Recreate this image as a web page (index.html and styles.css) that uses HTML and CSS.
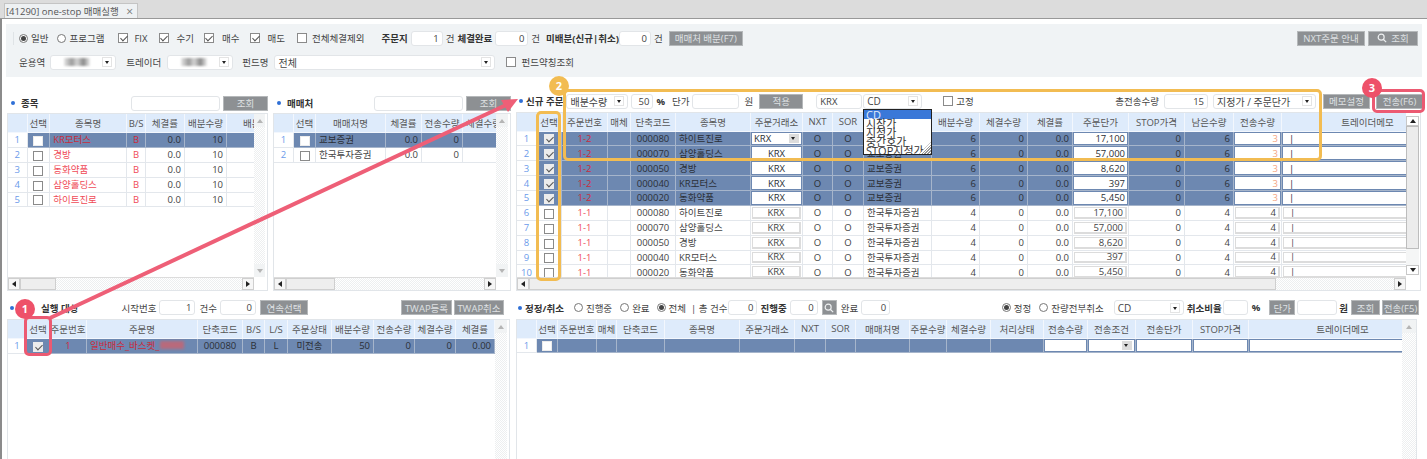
FILE: index.html
```html
<!DOCTYPE html>
<html lang="ko">
<head>
    <meta charset="UTF-8">
    <title>[41290] one-stop 매매실행</title>
    <link rel="stylesheet" href="styles.css">
</head>
<body>
    <!-- Tab bar -->
    <div class="tabbar">
        <div class="tab">[41290] one-stop 매매실행<span class="tab-x">×</span></div>
    </div>

    <div class="window">
        <!-- Filters -->
        <div class="filters">
            <div class="f-row">
                <span class="sep"></span>
                <label class="opt g3 ml-5"><i class="rd on"></i>일반</label>
                <label class="opt g3 ml-9"><i class="rd"></i>프로그램</label>
                <label class="opt g6 ml-14"><i class="ck on"></i>FIX</label>
                <label class="opt g8 ml-11"><i class="ck on"></i>수기</label>
                <label class="opt g8 ml-10"><i class="ck on"></i>매수</label>
                <label class="opt g7 ml-11"><i class="ck on"></i>매도</label>
                <label class="opt ml-12"><i class="ck"></i>전체체결제외</label>
                <b class="ml-17">주문지</b>
                <span class="input num w-32 ml-3">1</span><span class="ml-3">건</span>
                <b class="ml-3">체결완료</b>
                <span class="input num w-33 ml-3">0</span><span class="ml-3">건</span>
                <b class="ml-6">미배분(신규|취소)</b>
                <span class="input num w-32">0</span><span class="ml-3">건</span>
                <button class="btn w-74 ml-6">매매처 배분(F7)</button>
                <button class="btn w-68 push">NXT주문 안내</button>
                <button class="btn w-50 ml-3">
                    <svg class="glass" viewBox="0 0 12 12"><circle cx="5" cy="5" r="3.6"/><path d="M7.8 7.8 11 11"/></svg>
                    조회
                </button>
            </div>
            <div class="f-row f-row2">
                <span class="ml-6">운용역</span>
                <span class="select w-66 ml-5"><span class="smudge"></span><i class="drop"></i></span>
                <span class="ml-10">트레이더</span>
                <span class="select w-66 ml-6"><span class="smudge"></span><i class="drop"></i></span>
                <span class="ml-9">펀드명</span>
                <span class="select w-221 ml-6">전체<i class="drop"></i></span>
                <label class="opt ml-11"><i class="ck"></i>펀드약칭조회</label>
            </div>
        </div>

        <!-- Top row -->
        <div class="top-row">
            <section class="panel w-261">
                <div class="tool">
                    <i class="dot ml-4"></i><b class="ml-6">종목</b>
                    <span class="input w-89 push"></span>
                    <button class="btn w-45 ml-3">조회</button>
                </div>
                <div class="gridbox pr-2">
                    <div class="gridmain">
                        <div class="clip">
                            <table class="grid w-287">
                                <colgroup><col class="w-19"><col class="w-22"><col class="w-75"><col class="w-18"><col class="w-38"><col class="w-41"><col class="w-66"></colgroup>
                                <thead><tr><th></th><th>선택</th><th>종목명</th><th>B/S</th><th>체결률</th><th>배분수량</th><th>배분수량</th></tr></thead>
                                <tbody>
                                    <tr class="picked"><td class="n">1</td><td class="c"><i class="ck"></i></td><td class="l red">KR모터스</td><td class="c red">B</td><td class="r">0.0</td><td class="r">10</td><td class="r"></td></tr>
                                    <tr><td class="n">2</td><td class="c"><i class="ck"></i></td><td class="l red">경방</td><td class="c red">B</td><td class="r">0.0</td><td class="r">10</td><td class="r"></td></tr>
                                    <tr><td class="n">3</td><td class="c"><i class="ck"></i></td><td class="l red">동화약품</td><td class="c red">B</td><td class="r">0.0</td><td class="r">10</td><td class="r"></td></tr>
                                    <tr><td class="n">4</td><td class="c"><i class="ck"></i></td><td class="l red">삼양홀딩스</td><td class="c red">B</td><td class="r">0.0</td><td class="r">10</td><td class="r">500,000</td></tr>
                                    <tr><td class="n">5</td><td class="c"><i class="ck"></i></td><td class="l red">하이트진로</td><td class="c red">B</td><td class="r">0.0</td><td class="r">10</td><td class="r">100,000</td></tr>
                                </tbody>
                            </table>
                        </div>
                        <div class="vbar w-11"><span class="sb-btn"><i class="arr up"></i></span><span class="track"></span><span class="sb-btn"><i class="arr down"></i></span></div>
                    </div>
                    <div class="hbar mr-11"><span class="hb-btn"><i class="arr left dark"></i></span><span class="thumb w-36"></span><span class="track"></span><span class="hb-btn"><i class="arr right dark"></i></span></div>
                </div>
            </section>

            <section class="panel w-238 ml-5">
                <div class="tool">
                    <i class="dot ml-4"></i><b class="ml-6">매매처</b>
                    <span class="input w-89 push"></span>
                    <button class="btn w-45 ml-3">조회</button>
                </div>
                <div class="gridbox pr-2">
                    <div class="gridmain">
                        <div class="clip">
                            <table class="grid w-231">
                                <colgroup><col class="w-20"><col class="w-22"><col class="w-70"><col class="w-36"><col class="w-41"><col class="w-42"></colgroup>
                                <thead><tr><th></th><th>선택</th><th>매매처명</th><th>체결률</th><th>전송수량</th><th>체결수량</th></tr></thead>
                                <tbody>
                                    <tr class="picked"><td class="n">1</td><td class="c"><i class="ck"></i></td><td class="l">교보증권</td><td class="r">0.0</td><td class="r">0</td><td class="r"></td></tr>
                                    <tr><td class="n">2</td><td class="c"><i class="ck"></i></td><td class="l">한국투자증권</td><td class="r">0.0</td><td class="r">0</td><td class="r"></td></tr>
                                </tbody>
                            </table>
                        </div>
                        <div class="vbar w-12"><span class="sb-btn"><i class="arr up"></i></span><span class="track"></span><span class="sb-btn"><i class="arr down"></i></span></div>
                    </div>
                    <div class="hbar mr-12"><span class="hb-btn"><i class="arr left dark"></i></span><span class="thumb w-49"></span><span class="track"></span><span class="hb-btn"><i class="arr right dark"></i></span></div>
                </div>
            </section>

            <section class="panel w-905 ml-5">
                <div class="tool tool-order">
                    <i class="dot ml-3"></i><b class="ml-3">신규 주문</b>
                    <span class="select w-62 ml-3">배분수량<i class="drop"></i></span>
                    <span class="input num w-22 ml-3">50</span><b class="ml-3">%</b>
                    <span class="ml-7">단가</span>
                    <span class="input w-47 ml-3"></span><span class="ml-5">원</span>
                    <button class="btn w-44 ml-6">적용</button>
                    <span class="input w-46 ml-13 txt">KRX</span>
                    <span class="select w-59 ml-1">CD<i class="drop"></i></span>
                    <label class="opt g3 ml-21"><i class="ck"></i>고정</label>
                    <span class="push">총전송수량</span>
                    <span class="input num w-44 ml-5">15</span>
                    <span class="select w-103 ml-5">지정가 / 주문단가<i class="drop"></i></span>
                    <button class="btn w-47 ml-7">메모설정</button>
                    <button class="btn w-47 ml-6 mr-n2">전송(F6)</button>
                </div>
                <div class="gridbox pr-1">
                    <div class="gridmain">
                        <div class="clip">
                            <table class="grid w-937 head-18">
                                <colgroup><col class="w-20"><col class="w-25"><col class="w-46"><col class="w-23"><col class="w-45"><col class="w-75"><col class="w-52"><col class="w-30"><col class="w-31"><col class="w-68"><col class="w-48"><col class="w-48"><col class="w-45"><col class="w-56"><col class="w-56"><col class="w-49"><col class="w-48"><col class="w-172"></colgroup>
                                <thead><tr><th></th><th>선택</th><th>주문번호</th><th>매체</th><th>단축코드</th><th>종목명</th><th>주문거래소</th><th>NXT</th><th>SOR</th><th>매매처명</th><th>배분수량</th><th>체결수량</th><th>체결률</th><th>주문단가</th><th>STOP가격</th><th>남은수량</th><th>전송수량</th><th>트레이더메모</th></tr></thead>
                                <tbody>
                                    <tr class="picked"><td class="n">1</td><td class="c"><i class="ck on"></i></td><td class="c red">1-2</td><td></td><td class="c">000080</td><td class="l">하이트진로</td><td class="fc"><span class="field l fs">KRX<i class="drop"></i></span></td><td class="c">O</td><td class="c">O</td><td class="l">교보증권</td><td class="r">6</td><td class="r">0</td><td class="r">0.0</td><td class="fc"><span class="field r">17,100</span></td><td class="r">0</td><td class="r">6</td><td class="fc"><span class="field r peach">3</span></td><td class="fc"><span class="field l memo">|</span></td></tr>
                                    <tr class="picked"><td class="n">2</td><td class="c"><i class="ck on"></i></td><td class="c red">1-2</td><td></td><td class="c">000070</td><td class="l">삼양홀딩스</td><td class="fc"><span class="field c">KRX</span></td><td class="c">O</td><td class="c">O</td><td class="l">교보증권</td><td class="r">6</td><td class="r">0</td><td class="r">0.0</td><td class="fc"><span class="field r">57,000</span></td><td class="r">0</td><td class="r">6</td><td class="fc"><span class="field r peach">3</span></td><td class="fc"><span class="field l memo">|</span></td></tr>
                                    <tr class="picked"><td class="n">3</td><td class="c"><i class="ck on"></i></td><td class="c red">1-2</td><td></td><td class="c">000050</td><td class="l">경방</td><td class="fc"><span class="field c">KRX</span></td><td class="c">O</td><td class="c">O</td><td class="l">교보증권</td><td class="r">6</td><td class="r">0</td><td class="r">0.0</td><td class="fc"><span class="field r">8,620</span></td><td class="r">0</td><td class="r">6</td><td class="fc"><span class="field r peach">3</span></td><td class="fc"><span class="field l memo">|</span></td></tr>
                                    <tr class="picked"><td class="n">4</td><td class="c"><i class="ck on"></i></td><td class="c red">1-2</td><td></td><td class="c">000040</td><td class="l">KR모터스</td><td class="fc"><span class="field c">KRX</span></td><td class="c">O</td><td class="c">O</td><td class="l">교보증권</td><td class="r">6</td><td class="r">0</td><td class="r">0.0</td><td class="fc"><span class="field r">397</span></td><td class="r">0</td><td class="r">6</td><td class="fc"><span class="field r peach">3</span></td><td class="fc"><span class="field l memo">|</span></td></tr>
                                    <tr class="picked"><td class="n">5</td><td class="c"><i class="ck on"></i></td><td class="c red">1-2</td><td></td><td class="c">000020</td><td class="l">동화약품</td><td class="fc"><span class="field c">KRX</span></td><td class="c">O</td><td class="c">O</td><td class="l">교보증권</td><td class="r">6</td><td class="r">0</td><td class="r">0.0</td><td class="fc"><span class="field r">5,450</span></td><td class="r">0</td><td class="r">6</td><td class="fc"><span class="field r peach">3</span></td><td class="fc"><span class="field l memo">|</span></td></tr>
                                    <tr><td class="n">6</td><td class="c"><i class="ck"></i></td><td class="c red">1-1</td><td></td><td class="c">000080</td><td class="l">하이트진로</td><td class="fc"><span class="field c">KRX</span></td><td class="c">O</td><td class="c">O</td><td class="l">한국투자증권</td><td class="r">4</td><td class="r">0</td><td class="r">0.0</td><td class="fc"><span class="field r">17,100</span></td><td class="r">0</td><td class="r">4</td><td class="fc"><span class="field r">4</span></td><td class="fc"><span class="field l memo">|</span></td></tr>
                                    <tr><td class="n">7</td><td class="c"><i class="ck"></i></td><td class="c red">1-1</td><td></td><td class="c">000070</td><td class="l">삼양홀딩스</td><td class="fc"><span class="field c">KRX</span></td><td class="c">O</td><td class="c">O</td><td class="l">한국투자증권</td><td class="r">4</td><td class="r">0</td><td class="r">0.0</td><td class="fc"><span class="field r">57,000</span></td><td class="r">0</td><td class="r">4</td><td class="fc"><span class="field r">4</span></td><td class="fc"><span class="field l memo">|</span></td></tr>
                                    <tr><td class="n">8</td><td class="c"><i class="ck"></i></td><td class="c red">1-1</td><td></td><td class="c">000050</td><td class="l">경방</td><td class="fc"><span class="field c">KRX</span></td><td class="c">O</td><td class="c">O</td><td class="l">한국투자증권</td><td class="r">4</td><td class="r">0</td><td class="r">0.0</td><td class="fc"><span class="field r">8,620</span></td><td class="r">0</td><td class="r">4</td><td class="fc"><span class="field r">4</span></td><td class="fc"><span class="field l memo">|</span></td></tr>
                                    <tr><td class="n">9</td><td class="c"><i class="ck"></i></td><td class="c red">1-1</td><td></td><td class="c">000040</td><td class="l">KR모터스</td><td class="fc"><span class="field c">KRX</span></td><td class="c">O</td><td class="c">O</td><td class="l">한국투자증권</td><td class="r">4</td><td class="r">0</td><td class="r">0.0</td><td class="fc"><span class="field r">397</span></td><td class="r">0</td><td class="r">4</td><td class="fc"><span class="field r">4</span></td><td class="fc"><span class="field l memo">|</span></td></tr>
                                    <tr><td class="n">10</td><td class="c"><i class="ck"></i></td><td class="c red">1-1</td><td></td><td class="c">000020</td><td class="l">동화약품</td><td class="fc"><span class="field c">KRX</span></td><td class="c">O</td><td class="c">O</td><td class="l">한국투자증권</td><td class="r">4</td><td class="r">0</td><td class="r">0.0</td><td class="fc"><span class="field r">5,450</span></td><td class="r">0</td><td class="r">4</td><td class="fc"><span class="field r">4</span></td><td class="fc"><span class="field l memo">|</span></td></tr>
                                </tbody>
                            </table>
                        </div>
                        <div class="vbar w-13 active"><span class="sb-btn"><i class="arr up dark"></i></span><span class="vthumb"></span><span class="vgap"></span><span class="sb-btn"><i class="arr down dark"></i></span></div>
                    </div>
                    <div class="hbar mr-13"><span class="hb-btn"><i class="arr left dark"></i></span><span class="thumb w-747"></span><span class="track"></span><span class="hb-btn"><i class="arr right dark"></i></span></div>
                </div>
            </section>
        </div>

        <!-- Bottom row -->
        <div class="bottom-row">
            <section class="panel w-503">
                <div class="tool tool-low">
                    <i class="dot ml-3"></i><b class="ml-27">실행 대상</b>
                    <span class="ml-43">시작번호</span>
                    <span class="input num w-36 ml-3">1</span><span class="ml-4">건수</span>
                    <span class="input num w-36 ml-3">0</span>
                    <button class="btn w-48 ml-4">연속선택</button>
                    <button class="btn w-51 push">TWAP등록</button>
                    <button class="btn w-50 ml-2 mr-6">TWAP취소</button>
                </div>
                <div class="gridbox pr-2 open">
                    <div class="gridmain">
                        <div class="clip">
                            <table class="grid w-487">
                                <colgroup><col class="w-19"><col class="w-23"><col class="w-37"><col class="w-111"><col class="w-45"><col class="w-22"><col class="w-23"><col class="w-44"><col class="w-42"><col class="w-41"><col class="w-41"><col class="w-39"></colgroup>
                                <thead><tr><th></th><th>선택</th><th>주문번호</th><th>주문명</th><th>단축코드</th><th>B/S</th><th>L/S</th><th>주문상태</th><th>배분수량</th><th>전송수량</th><th>체결수량</th><th>체결률</th></tr></thead>
                                <tbody>
                                    <tr class="picked"><td class="n">1</td><td class="c"><i class="ck on"></i></td><td class="c red">1</td><td class="l red">일반매수_바스켓_<span class="smudge-red"></span></td><td class="c">000080</td><td class="c">B</td><td class="c">L</td><td class="c">미전송</td><td class="r">50</td><td class="r">0</td><td class="r">0</td><td class="r">0.00</td></tr>
                                </tbody>
                            </table>
                        </div>
                        <div class="vbar w-12"><span class="sb-btn"><i class="arr up"></i></span><span class="track"></span></div>
                    </div>
                </div>
            </section>

            <section class="panel w-901 ml-6">
                <div class="tool tool-low">
                    <i class="dot ml-2"></i><b class="ml-3">정정/취소</b>
                    <label class="opt g3 ml-10"><i class="rd"></i>진행중</label>
                    <label class="opt g3 ml-8"><i class="rd"></i>완료</label>
                    <label class="opt g3 ml-7"><i class="rd on"></i>전체</label>
                    <span class="ml-5">| 총 건수</span>
                    <span class="input num w-29 ml-1">0</span>
                    <b class="ml-3">진행중</b>
                    <span class="input num w-28 ml-3">0</span>
                    <button class="btn icon-btn ml-4"><svg class="glass" viewBox="0 0 12 12"><circle cx="5" cy="5" r="3.6"/><path d="M7.8 7.8 11 11"/></svg></button>
                    <span class="ml-4">완료</span>
                    <span class="input num w-29 ml-3">0</span>
                    <label class="opt g3 push"><i class="rd on"></i>정정</label>
                    <label class="opt g3 ml-8"><i class="rd"></i>잔량전부취소</label>
                    <span class="select w-70 ml-10">CD<i class="drop"></i></span>
                    <b class="ml-3">취소비율</b>
                    <span class="input w-25 ml-1"></span><b class="ml-4">%</b>
                    <button class="btn w-26 ml-9">단가</button>
                    <span class="input w-40 ml-2"></span><b class="ml-2">원</b>
                    <button class="btn w-29 ml-3">조회</button>
                    <button class="btn w-37 ml-2 mr-n2">전송(F5)</button>
                </div>
                <div class="gridbox open">
                    <div class="gridmain">
                        <div class="clip">
                            <table class="grid w-920 head-18">
                                <colgroup><col class="w-20"><col class="w-21"><col class="w-39"><col class="w-20"><col class="w-48"><col class="w-75"><col class="w-55"><col class="w-31"><col class="w-30"><col class="w-54"><col class="w-37"><col class="w-44"><col class="w-53"><col class="w-44"><col class="w-48"><col class="w-57"><col class="w-56"><col class="w-188"></colgroup>
                                <thead><tr><th></th><th>선택</th><th>주문번호</th><th>매체</th><th>단축코드</th><th>종목명</th><th>주문거래소</th><th>NXT</th><th>SOR</th><th>매매처명</th><th>주문수량</th><th>체결수량</th><th>처리상태</th><th>전송수량</th><th>전송조건</th><th>전송단가</th><th>STOP가격</th><th>트레이더메모</th></tr></thead>
                                <tbody>
                                    <tr class="picked"><td class="n">1</td><td class="c"><i class="ck"></i></td><td></td><td></td><td></td><td></td><td></td><td></td><td></td><td></td><td></td><td></td><td></td><td class="fc"><span class="field"></span></td><td class="fc"><span class="field fs"><i class="drop"></i></span></td><td class="fc"><span class="field"></span></td><td class="fc"><span class="field"></span></td><td class="fc"><span class="field"></span></td></tr>
                                </tbody>
                            </table>
                        </div>
                        <div class="vbar w-14"><span class="sb-btn"><i class="arr up"></i></span><span class="track"></span></div>
                    </div>
                </div>
            </section>
        </div>
    </div>

    <!-- Order type dropdown -->
    <ul class="dropdown">
        <li class="cur">CD</li>
        <li>시장가</li>
        <li>지정가</li>
        <li>중간호가</li>
        <li>STOP지정가</li>
    </ul>

    <!-- Guide annotations -->
    <svg class="arrow" viewBox="0 0 1427 459">
        <path d="M50 318 505 105.5"/>
        <polygon points="518,99 508,112 501,100"/>
    </svg>
    <div class="mark mark-pink m-check"></div>
    <div class="mark mark-pink m-send"></div>
    <div class="mark mark-gold m-col"></div>
    <div class="mark mark-gold m-rows"></div>
    <span class="badge badge-pink b1">1</span>
    <span class="badge badge-gold b2">2</span>
    <span class="badge badge-pink b3">3</span>
</body>
</html>
```
FILE: styles.css
```css
/* Base */
* {
    box-sizing: border-box;
}

html, body {
    margin: 0;
    height: 100%;
}

body {
    position: relative;
    width: 1427px;
    height: 459px;
    overflow: hidden;
    background: #fff;
    font-family: 'Open Sans', 'Noto Sans CJK KR', sans-serif;
    font-size: 9.5px;
    color: #444;
}

b {
    color: #333;
    font-weight: 700;
}

/* Tab bar */
.tabbar {
    height: 19px;
    padding: 3px 0 0 4px;
    background: #dcdcdc;
    border-bottom: 1px solid #999;
}

.tab {
    display: flex;
    align-items: center;
    width: 134px;
    height: 15px;
    padding-left: 1px;
    background: #eef1f3;
    border: 1px solid #c4c4c4;
    border-bottom: 0;
    font-size: 9.5px;
    color: #555;
}

.tab-x {
    margin-left: auto;
    margin-right: 4px;
    font-size: 12px;
    color: #777;
}

.window {
    height: 440px;
    padding: 5px 0 0 5px;
    border-left: 2px solid #8b8b8b;
}

/* Filter panel */
.filters {
    width: 1416px;
    height: 53px;
    margin-left: -1px;
    padding: 6px 0 0 7px;
    background: #f0f3f5;
}

.f-row {
    display: flex;
    align-items: center;
    height: 16px;
    padding-right: 4px;
    white-space: nowrap;
}

.f-row2 {
    margin-top: 8px;
}

.sep {
    width: 1px;
    height: 13px;
    background: #dfe3e6;
}

.opt {
    display: flex;
    align-items: center;
    gap: 5px;
}

.opt.g3 { gap: 3px; }
.opt.g6 { gap: 6px; }
.opt.g7 { gap: 7px; }
.opt.g8 { gap: 8px; }

.push {
    margin-left: auto;
}

/* Form bits */
.input, .select {
    display: flex;
    align-items: center;
    flex: none;
    height: 15px;
    padding: 0 3px;
    background: #fff;
    border: 1px solid #e2e5e8;
    border-radius: 3px;
}

.input.num {
    justify-content: flex-end;
}

.select {
    position: relative;
    font-size: 10px;
}

.drop {
    position: relative;
    flex: none;
    width: 10px;
    height: 10px;
    margin-left: auto;
    background: #fff;
    border: 1px solid #e4e4e4;
}

.drop::after {
    content: "";
    position: absolute;
    left: 2px;
    top: 3px;
    border: 2.5px solid transparent;
    border-top: 3px solid #222;
    border-bottom: 0;
}

.smudge {
    width: 26px;
    height: 8px;
    margin-left: 10px;
    background: linear-gradient(90deg, #e6e6e6, #9a9a9a 30%, #d5d5d5 50%, #8a8a8a 75%, #eee);
    filter: blur(1px);
}

.smudge-red {
    display: inline-block;
    width: 24px;
    height: 8px;
    background: #b86a7c;
    filter: blur(1.5px);
}

.btn {
    display: flex;
    align-items: center;
    justify-content: center;
    flex: none;
    gap: 4px;
    height: 15px;
    padding: 0;
    background: #8d9093;
    border: 1px solid #b5b8ba;
    font: inherit;
    color: #dfe1e3;
    white-space: nowrap;
}

.icon-btn {
    width: 15px;
}

.glass {
    width: 10px;
    height: 10px;
    fill: none;
    stroke: #eef0f1;
    stroke-width: 1.4;
}

.ck {
    position: relative;
    display: inline-block;
    flex: none;
    width: 10px;
    height: 10px;
    vertical-align: middle;
    background: #fff;
    border: 1px solid #8a8a8a;
}

.ck.on::after {
    content: "";
    position: absolute;
    left: 2.5px;
    top: 0;
    width: 3px;
    height: 6px;
    border-right: 1.5px solid #555;
    border-bottom: 1.5px solid #555;
    transform: rotate(45deg);
}

.rd {
    position: relative;
    flex: none;
    width: 9px;
    height: 9px;
    background: #fff;
    border: 1px solid #777;
    border-radius: 50%;
}

.rd.on::after {
    content: "";
    position: absolute;
    left: 1px;
    top: 1px;
    width: 5px;
    height: 5px;
    background: #444;
    border-radius: 50%;
}

.dot {
    flex: none;
    width: 4px;
    height: 4px;
    background: #2f6fd6;
    border-radius: 50%;
}

/* Panels */
.top-row {
    display: flex;
    height: 197px;
    margin-top: 17px;
}

.bottom-row {
    display: flex;
    height: 160px;
    margin-top: 8px;
}

.panel {
    display: flex;
    flex-direction: column;
    flex: none;
}

.tool {
    display: flex;
    align-items: center;
    flex: none;
    height: 19px;
    padding-bottom: 1px;
    white-space: nowrap;
}

.tool-order {
    height: 18px;
    padding: 0 0 4px 0;
}

.tool-low {
    height: 20px;
    padding: 0 0 3px 0;
}

.gridbox {
    display: flex;
    flex-direction: column;
    flex: 1;
    min-height: 0;
    border: 1px solid #e1e5e9;
}

.gridbox.open {
    border-bottom: 0;
}

.gridmain {
    display: flex;
    flex: 1;
    min-height: 0;
}

.clip {
    flex: 1;
    min-width: 0;
    overflow: hidden;
}

/* Grid */
.grid {
    table-layout: fixed;
    border-collapse: separate;
    border-spacing: 0;
}

.grid th {
    height: 19px;
    padding: 0;
    background: #deebfb;
    border-right: 1px solid #f3f7fd;
    border-bottom: 1px solid #f3f7fd;
    font-weight: 400;
    color: #555;
    white-space: nowrap;
    overflow: hidden;
}

.head-18 th {
    height: 18.5px;
}

.grid td {
    height: 14.875px;
    padding: 0 3px;
    line-height: 13px;
    border-right: 1px solid #e3e7ec;
    border-bottom: 1px solid #e3e7ec;
    white-space: nowrap;
    overflow: hidden;
}

.grid td.n {
    padding: 0;
    text-align: center;
    color: #6b9bea;
}

.grid td.c {
    padding: 0;
    text-align: center;
}

.grid td.l {
    text-align: left;
}

.grid td.r {
    text-align: right;
}

.grid td.fc {
    padding: 1px;
    background: #fff;
}

.red {
    color: #ef4a57;
}

.field {
    display: flex;
    align-items: center;
    height: 11.875px;
    padding: 0 2px;
    background: #fff;
    border: 1px solid #dcdcdc;
    border-width: 1px 2px 2px 1px;
    overflow: hidden;
}

.field.c {
    justify-content: center;
}

.field.r {
    justify-content: flex-end;
}

.field.memo {
    padding-left: 6px;
}

.field .drop {
    height: 9px;
    background: #dcdcdc;
    border: 0;
}

.peach {
    color: #f3a583;
}

.picked td {
    background: #6d88b1;
    border-color: #a6b5cb;
    color: #2b2f36;
}

.picked td.n {
    background: #fff;
    border-color: #e3e7ec;
}

.picked .red {
    color: #c92b3c;
}

.picked td.fc {
    background: #6d88b1;
}

.picked .field {
    border: 0;
}

.picked .ck {
    background: #ececec;
    border-color: #ececec;
}

.picked .ck:not(.on) {
    background: #fff;
}

/* Scrollbars */
.vbar {
    display: flex;
    flex-direction: column;
    flex: none;
}

.sb-btn, .hb-btn {
    display: flex;
    align-items: center;
    justify-content: center;
    flex: none;
}

.sb-btn {
    height: 13px;
    background: #f1f3f4;
}

.track {
    flex: 1;
    background: repeating-conic-gradient(#fff 0 25%, #edeff0 0 50%) 0 0 / 2px 2px;
}

.active .sb-btn {
    height: 10px;
    background: #fff;
    border: 1px solid #c8c8c8;
}

.active .sb-btn:first-child {
    margin-top: 3px;
}

.vthumb {
    height: 123px;
    background: #ececec;
    border: 1px solid #bdbdbd;
}

.vgap {
    height: 16px;
    background: #f5f6f6;
}

.hbar {
    display: flex;
    flex: none;
    height: 13px;
    border-top: 1px solid #dcdcdc;
}

.hb-btn {
    width: 12px;
    background: #f6f6f6;
    border: 1px solid #cfcfcf;
}

.thumb {
    flex: none;
    background: #eeeeee;
    border: 1px solid #cfcfcf;
}

.arr {
    width: 0;
    height: 0;
    border: 3.5px solid transparent;
}

.arr.up {
    border-top: 0;
    border-bottom: 4px solid #b5b5b5;
}

.arr.down {
    border-bottom: 0;
    border-top: 4px solid #b5b5b5;
}

.arr.left {
    border-left: 0;
    border-right: 4px solid #222;
}

.arr.right {
    border-right: 0;
    border-left: 4px solid #222;
}

.arr.up.dark {
    border-bottom-color: #222;
}

.arr.down.dark {
    border-top-color: #222;
}

/* Order type dropdown */
.dropdown {
    position: absolute;
    left: 863px;
    top: 109px;
    width: 69px;
    height: 46px;
    margin: 0;
    padding: 0;
    list-style: none;
    background: #fff;
    border: 1px solid #222;
    font-size: 11px;
    line-height: 9px;
    color: #333;
    overflow: hidden;
}

.dropdown li {
    height: 9px;
    padding-left: 2px;
}

.dropdown .cur {
    background: #3a78d8;
    color: #e4ecf8;
}

.dropdown::after {
    content: "";
    position: absolute;
    right: 0;
    bottom: 0;
    width: 12px;
    height: 12px;
    background: repeating-linear-gradient(135deg, #999 0 1px, #fff 1px 2px);
    clip-path: polygon(100% 0, 100% 100%, 0 100%);
}

/* Annotations */
.arrow {
    position: absolute;
    left: 0;
    top: 0;
    width: 1427px;
    height: 459px;
    pointer-events: none;
}

.arrow path {
    fill: none;
    stroke: #ee5f77;
    stroke-width: 4;
}

.arrow polygon {
    fill: #ee5f77;
}

.mark {
    position: absolute;
    border: 3px solid;
    border-radius: 5px;
}

.mark-pink {
    border-color: #ec5a72;
}

.mark-gold {
    border-color: #f2bc52;
}

.m-check {
    left: 24px;
    top: 316px;
    width: 28px;
    height: 40px;
}

.m-send {
    left: 1372px;
    top: 89px;
    width: 53px;
    height: 24px;
}

.m-col {
    left: 536px;
    top: 111px;
    width: 25px;
    height: 170px;
}

.m-rows {
    left: 563px;
    top: 89px;
    width: 759px;
    height: 72px;
}

.badge {
    position: absolute;
    width: 20px;
    height: 20px;
    border-radius: 50%;
    font-size: 11px;
    font-weight: 700;
    line-height: 20px;
    text-align: center;
    color: #fff;
}

.badge-pink {
    background: #ee5169;
}

.badge-gold {
    background: #f2bc52;
}

.b1 {
    left: 15px;
    top: 299px;
}

.b2 {
    left: 549px;
    top: 76px;
}

.b3 {
    left: 1362px;
    top: 78px;
}

/* Spacing and width helpers */
.ml-1 { margin-left: 1px; }
.ml-2 { margin-left: 2px; }
.ml-3 { margin-left: 3px; }
.ml-4 { margin-left: 4px; }
.ml-5 { margin-left: 5px; }
.ml-6 { margin-left: 6px; }
.ml-7 { margin-left: 7px; }
.ml-8 { margin-left: 8px; }
.ml-9 { margin-left: 9px; }
.ml-10 { margin-left: 10px; }
.ml-11 { margin-left: 11px; }
.ml-12 { margin-left: 12px; }
.ml-13 { margin-left: 13px; }
.ml-14 { margin-left: 14px; }
.ml-17 { margin-left: 17px; }
.ml-21 { margin-left: 21px; }
.ml-27 { margin-left: 27px; }
.ml-43 { margin-left: 43px; }
.mr-6 { margin-right: 6px; }
.mr-11 { margin-right: 11px; }
.mr-12 { margin-right: 12px; }
.mr-13 { margin-right: 13px; }
.mr-n2 { margin-right: -2px; }
.pr-1 { padding-right: 1px; }
.pr-2 { padding-right: 2px; }

.w-11 { width: 11px; }
.w-12 { width: 12px; }
.w-13 { width: 13px; }
.w-14 { width: 14px; }
.w-18 { width: 18px; }
.w-19 { width: 19px; }
.w-20 { width: 20px; }
.w-21 { width: 21px; }
.w-22 { width: 22px; }
.w-23 { width: 23px; }
.w-25 { width: 25px; }
.w-26 { width: 26px; }
.w-28 { width: 28px; }
.w-29 { width: 29px; }
.w-30 { width: 30px; }
.w-31 { width: 31px; }
.w-32 { width: 32px; }
.w-33 { width: 33px; }
.w-36 { width: 36px; }
.w-37 { width: 37px; }
.w-38 { width: 38px; }
.w-39 { width: 39px; }
.w-40 { width: 40px; }
.w-41 { width: 41px; }
.w-42 { width: 42px; }
.w-44 { width: 44px; }
.w-45 { width: 45px; }
.w-46 { width: 46px; }
.w-47 { width: 47px; }
.w-48 { width: 48px; }
.w-49 { width: 49px; }
.w-50 { width: 50px; }
.w-51 { width: 51px; }
.w-52 { width: 52px; }
.w-53 { width: 53px; }
.w-54 { width: 54px; }
.w-55 { width: 55px; }
.w-56 { width: 56px; }
.w-57 { width: 57px; }
.w-59 { width: 59px; }
.w-62 { width: 62px; }
.w-66 { width: 66px; }
.w-68 { width: 68px; }
.w-70 { width: 70px; }
.w-74 { width: 74px; }
.w-75 { width: 75px; }
.w-89 { width: 89px; }
.w-103 { width: 103px; }
.w-111 { width: 111px; }
.w-172 { width: 172px; }
.w-188 { width: 188px; }
.w-221 { width: 221px; }
.w-231 { width: 231px; }
.w-238 { width: 238px; }
.w-261 { width: 261px; }
.w-287 { width: 287px; }
.w-487 { width: 487px; }
.w-503 { width: 503px; }
.w-747 { width: 747px; }
.w-901 { width: 901px; }
.w-905 { width: 905px; }
.w-920 { width: 920px; }
.w-937 { width: 937px; }
```
